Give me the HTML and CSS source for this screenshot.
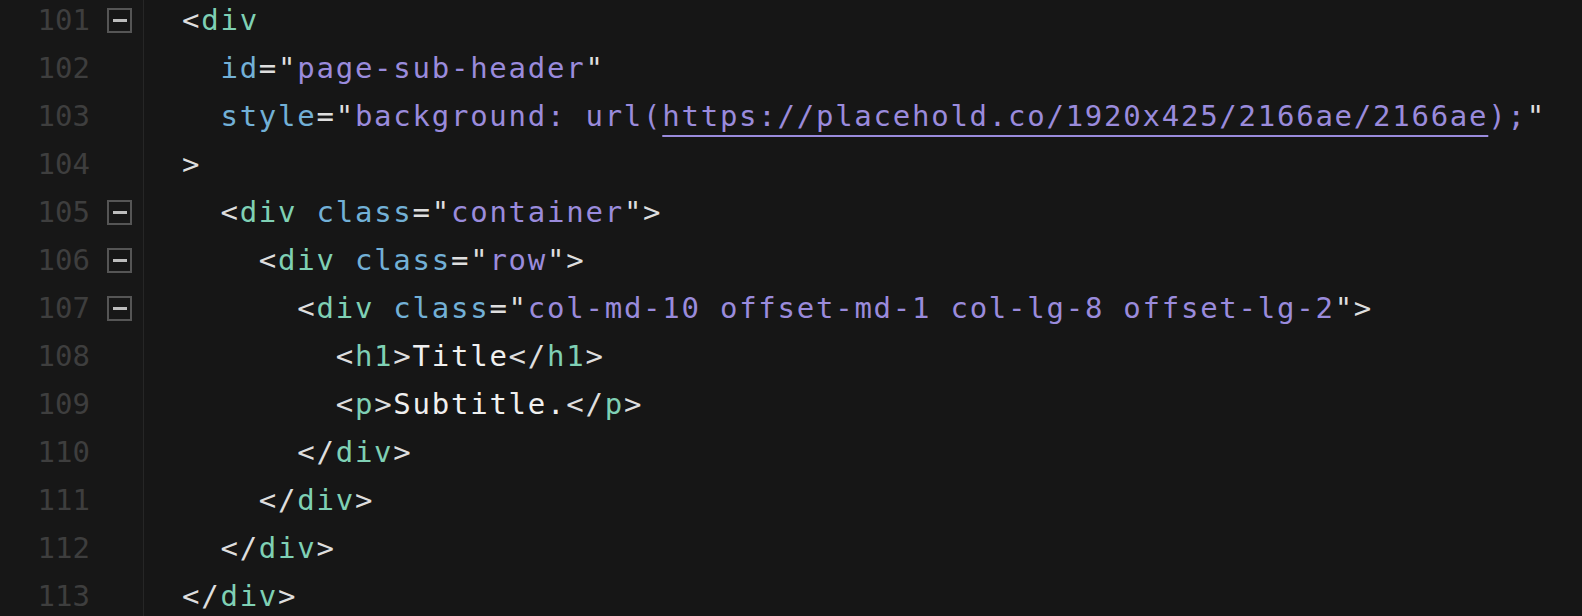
FILE: index.html
```html
<!DOCTYPE html>
<html>
<head>
<meta charset="utf-8">
<link rel="stylesheet" href="styles.css">
</head>
<body>
<div class="editor">
  <div class="gutter">
    <div class="gl"><span class="num">101</span><span class="fold"><span class="bar"></span></span></div>
    <div class="gl"><span class="num">102</span></div>
    <div class="gl"><span class="num">103</span></div>
    <div class="gl"><span class="num">104</span></div>
    <div class="gl"><span class="num">105</span><span class="fold"><span class="bar"></span></span></div>
    <div class="gl"><span class="num">106</span><span class="fold"><span class="bar"></span></span></div>
    <div class="gl"><span class="num">107</span><span class="fold"><span class="bar"></span></span></div>
    <div class="gl"><span class="num">108</span></div>
    <div class="gl"><span class="num">109</span></div>
    <div class="gl"><span class="num">110</span></div>
    <div class="gl"><span class="num">111</span></div>
    <div class="gl"><span class="num">112</span></div>
    <div class="gl"><span class="num">113</span></div>
  </div>
  <div class="code">
<div class="cl"><span class="p">&lt;</span><span class="t">div</span></div>
<div class="cl">  <span class="a">id</span><span class="p">="</span><span class="s">page-sub-header</span><span class="p">"</span></div>
<div class="cl">  <span class="a">style</span><span class="p">="</span><span class="s">background: url(<span class="u">https://placehold.co/1920x425/2166ae/2166ae</span>);</span><span class="p">"</span></div>
<div class="cl"><span class="p">&gt;</span></div>
<div class="cl">  <span class="p">&lt;</span><span class="t">div</span> <span class="a">class</span><span class="p">="</span><span class="s">container</span><span class="p">"&gt;</span></div>
<div class="cl">    <span class="p">&lt;</span><span class="t">div</span> <span class="a">class</span><span class="p">="</span><span class="s">row</span><span class="p">"&gt;</span></div>
<div class="cl">      <span class="p">&lt;</span><span class="t">div</span> <span class="a">class</span><span class="p">="</span><span class="s">col-md-10 offset-md-1 col-lg-8 offset-lg-2</span><span class="p">"&gt;</span></div>
<div class="cl">        <span class="p">&lt;</span><span class="t">h1</span><span class="p">&gt;</span><span class="x">Title</span><span class="p">&lt;/</span><span class="t">h1</span><span class="p">&gt;</span></div>
<div class="cl">        <span class="p">&lt;</span><span class="t">p</span><span class="p">&gt;</span><span class="x">Subtitle.</span><span class="p">&lt;/</span><span class="t">p</span><span class="p">&gt;</span></div>
<div class="cl">      <span class="p">&lt;/</span><span class="t">div</span><span class="p">&gt;</span></div>
<div class="cl">    <span class="p">&lt;/</span><span class="t">div</span><span class="p">&gt;</span></div>
<div class="cl">  <span class="p">&lt;/</span><span class="t">div</span><span class="p">&gt;</span></div>
<div class="cl"><span class="p">&lt;/</span><span class="t">div</span><span class="p">&gt;</span></div>
  </div>
</div>
</body>
</html>
```

FILE: styles.css
```css
html, body {
  margin: 0;
  padding: 0;
  background: #161616;
  height: 100%;
  overflow: hidden;
}

.editor {
  display: flex;
  height: 100%;
  font-family: "DejaVu Sans Mono", "Liberation Mono", monospace;
  font-size: 29px;
}

.gutter {
  width: 143px;
  flex: none;
  border-right: 1px solid #262626;
  background: #171717;
  margin-top: -4px;
}

.gl {
  height: 48px;
  display: flex;
  align-items: center;
}

.num {
  width: 90px;
  text-align: right;
  color: #3e3e3e;
  line-height: 48px;
}

.fold {
  margin-left: 17px;
  width: 21px;
  height: 21px;
  border: 2px solid #555555;
  display: flex;
  align-items: center;
  justify-content: center;
}

.bar {
  width: 14px;
  height: 3px;
  background: #bdbdbd;
}

.code {
  flex: 1;
  padding-left: 38px;
  margin-top: -4px;
}

.cl {
  height: 48px;
  line-height: 48px;
  white-space: pre;
  letter-spacing: 1.75px;
  color: #dedede;
}

.p { color: #dedede; }
.t { color: #7fd0b4; }
.a { color: #72b0d6; }
.s { color: #9a8bdc; }
.x { color: #f0f0f0; }
.u {
  text-decoration: underline;
  text-decoration-color: #9a8bdc;
  text-decoration-thickness: 2px;
  text-underline-offset: 9px;
}
```
